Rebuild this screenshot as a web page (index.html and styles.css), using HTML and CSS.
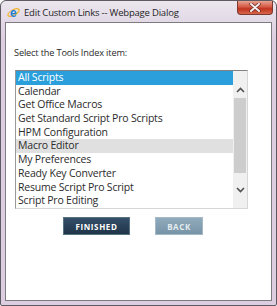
FILE: index.html
```html
<!DOCTYPE html>
<html lang="en">
<head>
  <meta charset="UTF-8" />
  <title>Edit Custom Links -- Webpage Dialog</title>
  <link rel="stylesheet" href="styles.css">
</head>
<body>
  <div class="window">
    <div class="titlebar">
      <svg class="ie-icon" width="13" height="13" viewBox="0 0 13 13">
        <ellipse cx="6.5" cy="6.5" rx="6.2" ry="2.6" transform="rotate(-30 6.5 6.5)" fill="none" stroke="#f0b431" stroke-width="1.3"/>
        <text x="6.3" y="10.6" text-anchor="middle" font-family="Liberation Sans, sans-serif" font-size="12" font-weight="bold" fill="#1f7fd2">e</text>
      </svg>
      <span class="title">Edit Custom Links -- Webpage Dialog</span>
      <div class="close">
        <svg width="12" height="9" viewBox="0 0 12 9">
          <path d="M2 1 L10 8 M10 1 L2 8" stroke="#6a2a22" stroke-width="3.4" stroke-linecap="round"/>
          <path d="M2 1 L10 8 M10 1 L2 8" stroke="#f4eeee" stroke-width="2" stroke-linecap="round"/>
        </svg>
      </div>
    </div>

    <div class="content">
      <p class="prompt">Select the Tools Index item:</p>

      <div class="listbox">
        <ul class="items">
          <li class="selected">All Scripts</li>
          <li>Calendar</li>
          <li>Get Office Macros</li>
          <li>Get Standard Script Pro Scripts</li>
          <li>HPM Configuration</li>
          <li class="hover">Macro Editor</li>
          <li>My Preferences</li>
          <li>Ready Key Converter</li>
          <li>Resume Script Pro Script</li>
          <li>Script Pro Editing</li>
        </ul>
        <div class="scrollbar">
          <div class="arrow">
            <svg width="9" height="6" viewBox="0 0 9 6"><path d="M1 5 L4.5 1.5 L8 5" fill="none" stroke="#505050" stroke-width="1.6"/></svg>
          </div>
          <div class="track"><div class="thumb"></div></div>
          <div class="arrow">
            <svg width="9" height="6" viewBox="0 0 9 6"><path d="M1 1 L4.5 4.5 L8 1" fill="none" stroke="#505050" stroke-width="1.6"/></svg>
          </div>
        </div>
      </div>

      <div class="buttons">
        <button class="btn finished">FINISHED</button>
        <button class="btn back">BACK</button>
      </div>
    </div>
  </div>
</body>
</html>
```

FILE: styles.css
```css
:root {
  --frame: #dccde0;
  --edge: #5e5a62;
  --select: #2a9fdc;
  --text: #2b2b2b;
}
html, body {
  margin: 0;
  padding: 0;
  background: #fff;
}
.window {
  width: 277px;
  height: 306px;
  box-sizing: border-box;
  border: 1px solid var(--edge);
  border-radius: 6px 6px 2px 2px;
  background: linear-gradient(to bottom, #ebe6ee 0, #e2d8e6 22px, var(--frame) 40px, var(--frame) 100%);
  display: flex;
  flex-direction: column;
  padding: 0 4px 4px 4px;
  font-family: "Open Sans", "Noto Sans", sans-serif;
}
.titlebar {
  height: 21px;
  display: flex;
  align-items: flex-start;
}
.ie-icon {
  margin: 5px 0 0 2px;
}
.title {
  font-size: 9.5px;
  color: #1e1e1e;
  margin: 5px 0 0 4px;
  letter-spacing: -0.2px;
}
.close {
  margin-left: auto;
  margin-right: -1px;
  width: 36px;
  height: 14px;
  box-sizing: border-box;
  border: 1px solid #7a3a30;
  border-top: none;
  border-radius: 0 0 4px 4px;
  background: linear-gradient(to bottom, #e8a393 0, #d35a43 45%, #c0331f 60%, #d8664c 100%);
  display: flex;
  align-items: center;
  justify-content: center;
}
.content {
  flex: 1;
  background: #fff;
  border: 1px solid #7d7b80;
  padding: 0 8px;
}
.prompt {
  margin: 23px 0 0 0;
  font-size: 9.2px;
  line-height: 14px;
  color: var(--text);
  letter-spacing: -0.15px;
}
.listbox {
  margin: 10px 0 0 1px;
  width: 233px;
  height: 139px;
  box-sizing: border-box;
  border: 1px solid #d6d6d6;
  border-top-color: #828282;
  border-left-color: #9a9a9a;
  display: flex;
}
.items {
  list-style: none;
  margin: 0;
  padding: 0;
  flex: 1;
}
.items li {
  height: 13.7px;
  line-height: 13.7px;
  padding-left: 2px;
  font-size: 10.5px;
  color: var(--text);
  white-space: nowrap;
  letter-spacing: -0.2px;
}
.items li.selected {
  background: var(--select);
  color: #fff;
}
.items li.hover {
  background: #e0e0e0;
}
.scrollbar {
  width: 14px;
  background: #f0f0f0;
  display: flex;
  flex-direction: column;
  padding: 10px 0;
  box-sizing: border-box;
}
.arrow {
  height: 17px;
  display: flex;
  align-items: center;
  justify-content: center;
}
.track {
  flex: 1;
  padding: 0 1px;
}
.thumb {
  height: 75px;
  background: #cdcdcd;
}
.buttons {
  display: flex;
  gap: 25px;
  margin: 8px 0 0 49px;
}
.btn {
  height: 18px;
  border: 1px solid #4c6a7f;
  padding: 0;
  font-family: "Open Sans", sans-serif;
  font-weight: bold;
  font-size: 8px;
  letter-spacing: 0.6px;
  color: #fff;
}
.finished {
  width: 67px;
  background: linear-gradient(to bottom, #35506a, #1f3447);
  border-color: #587286;
}
.back {
  width: 48px;
  background: linear-gradient(to bottom, #8fabbc, #7793a6);
  border-color: #a4bac7;
  color: #e4ebef;
}
```
